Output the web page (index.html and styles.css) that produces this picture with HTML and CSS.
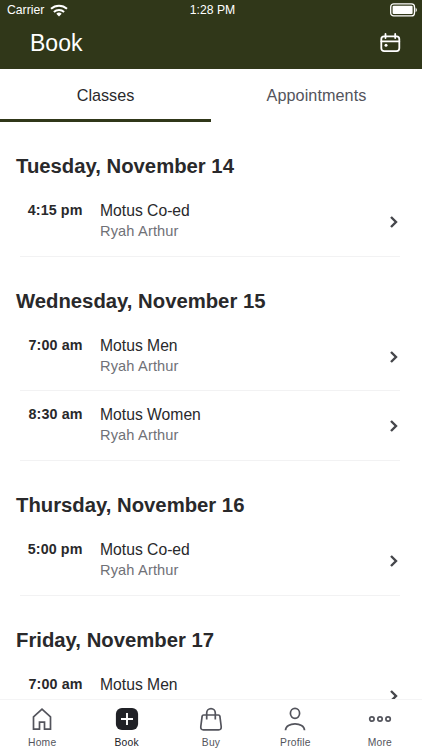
FILE: index.html
```html
<!DOCTYPE html>
<html lang="en">
<head>
<meta charset="utf-8">
<title>Book</title>
<link rel="stylesheet" href="styles.css">
</head>
<body>
<svg class="defs" aria-hidden="true"><symbol id="chevron" viewBox="0 0 10 14"><path d="M2 2l5 5-5 5" fill="none" stroke="currentColor" stroke-width="2.4"/></symbol></svg>
<div class="app">
  <header class="header">
    <div class="status">
      <div class="carrier"><span>Carrier</span>
        <svg width="18" height="13" viewBox="0 0 18 13" fill="none" stroke="#fff" stroke-width="2"><path d="M1 4.800C5.500.7 12.500.7 17 4.800"/><path d="M3.900 7.900c2.900-2.600 7.300-2.600 10.200 0"/><path d="M6.300 9.800a3.800 3.800 0 0 1 5.400 0L9 12.500z" fill="#fff" stroke="none"/></svg>
      </div>
      <span class="clock">1:28 PM</span>
      <svg class="battery" width="28" height="14" viewBox="0 0 28 14"><rect x=".7" y=".9" width="23.800" height="12" rx="3" fill="none" stroke="#fff" stroke-width="1.300"/><rect x="2.600" y="2.800" width="20" height="8.200" rx="1" fill="#fff"/><path d="M25.600 4.500q2.600 2.400 0 4.800z" fill="#fff"/></svg>
    </div>
    <div class="titlebar">
      <h1>Book</h1>
      <svg width="21" height="20" viewBox="0 0 21 20" fill="none" stroke="#fff" stroke-width="1.800" stroke-linecap="round"><rect x="1.300" y="3.300" width="18" height="14.800" rx="2.800"/><path d="M1.300 8.300h18M5.500 1v4M15.200 1v4"/><circle cx="6" cy="12.300" r="1.500" fill="#fff" stroke="none"/></svg>
    </div>
  </header>
  <nav class="tabs"><a class="tab active">Classes</a><a class="tab">Appointments</a></nav>
  <main class="list">
    <section>
      <h2>Tuesday, November 14</h2>
      <div class="row"><b class="time">4:15 pm</b><div class="info"><span>Motus Co-ed</span><small>Ryah Arthur</small></div><svg class="chevron"><use href="#chevron"/></svg></div>
    </section>
    <section>
      <h2>Wednesday, November 15</h2>
      <div class="row"><b class="time">7:00 am</b><div class="info"><span>Motus Men</span><small>Ryah Arthur</small></div><svg class="chevron"><use href="#chevron"/></svg></div>
      <div class="row"><b class="time">8:30 am</b><div class="info"><span>Motus Women</span><small>Ryah Arthur</small></div><svg class="chevron"><use href="#chevron"/></svg></div>
    </section>
    <section>
      <h2>Thursday, November 16</h2>
      <div class="row"><b class="time">5:00 pm</b><div class="info"><span>Motus Co-ed</span><small>Ryah Arthur</small></div><svg class="chevron"><use href="#chevron"/></svg></div>
    </section>
    <section>
      <h2>Friday, November 17</h2>
      <div class="row"><b class="time">7:00 am</b><div class="info"><span>Motus Men</span></div><svg class="chevron"><use href="#chevron"/></svg></div>
    </section>
  </main>
  <nav class="bottom">
    <a><svg viewBox="0 0 26 26"><path d="M4.500 23.200V10.800L13 3.200l8.500 7.600v12.400h-6v-7h-5v7z"/></svg><span>Home</span></a>
    <a class="current"><svg viewBox="0 0 26 26"><rect x="1.900" y="1.900" width="22.200" height="22.200" rx="6" fill="#202126" stroke="none"/><path d="M13 7v12M7 13h12" stroke="#fff" stroke-width="1.900"/></svg><span>Book</span></a>
    <a><svg viewBox="0 0 26 26"><path d="M5.600 9h14.800q1.200 0 1.500 1.300l1.300 10.200q.4 3.300-2.600 3.300H5.400q-3 0-2.600-3.300l1.300-10.200Q4.400 9 5.600 9zM8.700 13.500V7a4.300 4.300 0 0 1 8.600 0v6.500"/></svg><span>Buy</span></a>
    <a><svg viewBox="0 0 26 26"><ellipse cx="13" cy="7.300" rx="4.600" ry="5"/><path d="M3.500 24.300c0-8.700 19-8.700 19 0"/></svg><span>Profile</span></a>
    <a><svg viewBox="0 0 26 26"><circle cx="4.900" cy="13" r="2.200"/><circle cx="13" cy="13" r="2.200"/><circle cx="21.100" cy="13" r="2.200"/></svg><span>More</span></a>
  </nav>
</div>
</body>
</html>
```
FILE: styles.css
```css
* { box-sizing: border-box; }
body { margin: 0; background: #fff; font-family: "Liberation Sans", Arial, sans-serif; color: #29292b; }
.defs { display: none; }
.app { width: 422px; height: 750px; display: flex; flex-direction: column; overflow: hidden; }
.header { flex: none; height: 69px; background: #303719; color: #fff; }
.status { height: 20px; padding: 0 4px 0 7px; display: grid; grid-template-columns: 1fr auto 1fr; align-items: center; font-size: 12.2px; }
.carrier { display: flex; align-items: center; gap: 6px; }
.clock { padding-bottom: 1px; }
.battery { justify-self: end; }
.titlebar { height: 46px; padding: 0 21px 0 30px; display: flex; align-items: center; justify-content: space-between; }
h1 { margin: 0; font-size: 23px; font-weight: 400; }
.tabs { flex: none; height: 53px; display: flex; font-size: 16.2px; }
.tab { flex: 1; display: flex; align-items: center; justify-content: center; padding-top: 2px; color: #53545c; border-bottom: 3px solid transparent; }
.tab:last-child { letter-spacing: .08px; }
.tab.active { color: #29292b; border-color: #303719; }
.list { flex: 1; min-height: 0; overflow: hidden; }
h2 { margin: 0; height: 65px; padding: 32px 16px 0; font-size: 20.3px; line-height: 24px; }
.row { height: 69.7px; margin: 0 22px 0 20px; padding: 11px 0 0; display: flex; border-bottom: 1px solid #f2f2f3; }
.time { width: 62.5px; margin-right: 17.5px; text-align: right; font-size: 14.3px; line-height: 24px; letter-spacing: .1px; }
.info { flex: 1; display: flex; flex-direction: column; font-size: 15.7px; line-height: 24px; padding-top: 1px; }
.info small { font-size: 14.6px; line-height: 18px; margin-top: -1px; color: #707177; letter-spacing: .14px; }
.chevron { width: 10px; height: 14px; margin: 17px 1px 0 0; color: #45464b; }
.bottom { flex: none; height: 51px; border-top: 1px solid #f4f4f5; display: flex; background: #fff; }
.bottom a { flex: 1; display: flex; flex-direction: column; align-items: center; padding-top: 6px; color: #53545c; font-size: 10.3px; letter-spacing: .22px; }
.bottom svg { width: 26px; height: 26px; fill: none; stroke: currentColor; stroke-width: 1.7; }
.bottom span { line-height: 14px; margin-top: 4px; }
.bottom .current { color: #202126; }
```
